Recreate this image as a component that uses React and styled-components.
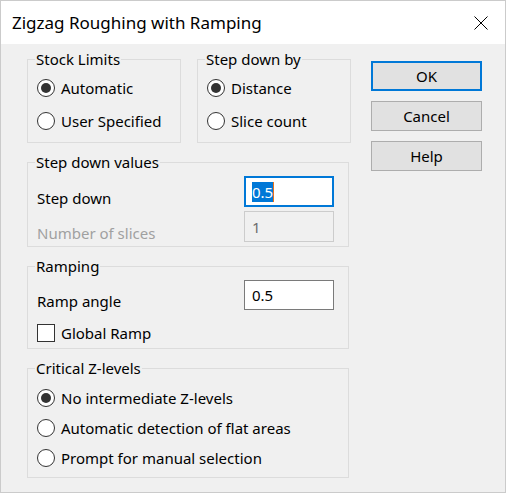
import React from 'react';
import styled, { createGlobalStyle } from 'styled-components';

const GlobalStyle = createGlobalStyle`
  html, body {
    margin: 0;
    padding: 0;
    background: #ffffff;
  }
  body {
    font-family: "Noto Sans", "Open Sans", sans-serif;
    font-size: 15px;
    color: #000000;
  }
`;

const Window = styled.div`
  width: 506px;
  height: 493px;
  box-sizing: border-box;
  border: 1px solid #cbcbcb;
  background: #f0f0f0;
  display: flex;
  flex-direction: column;
`;

const TitleBar = styled.div`
  height: 43px;
  background: #ffffff;
  display: flex;
  align-items: center;
  justify-content: space-between;
  padding: 0 17px 0 11px;
  flex-shrink: 0;
`;

const Title = styled.span`
  font-size: 17px;
  line-height: 22px;
  margin-top: 1px;
`;

const CloseButton = styled.div`
  width: 14px;
  height: 14px;
  display: flex;
`;

const Body = styled.div`
  display: flex;
  padding: 6px 22px 0 26px;
  gap: 22px;
`;

const LeftColumn = styled.div`
  width: 322px;
  display: flex;
  flex-direction: column;
  gap: 10px;
`;

const TopRow = styled.div`
  display: flex;
  gap: 16px;
`;

const Group = styled.fieldset`
  margin: 0;
  min-width: 0;
  flex: ${p => (p.$half ? '0 0 154px' : 'none')};
  box-sizing: border-box;
  border: 1px solid #dcdcdc;
  padding: ${p => p.$pad || '3px 14px 5px 9px'};
`;

const Legend = styled.legend`
  padding: 0 1px;
  margin-left: -2px;
  line-height: 18px;
`;

const OptionRow = styled.label`
  display: flex;
  align-items: center;
  gap: 6px;
  height: ${p => p.$h || 33}px;
  white-space: nowrap;
`;

const Radio = styled.span`
  width: 18px;
  height: 18px;
  box-sizing: border-box;
  border: 1px solid #333333;
  border-radius: 50%;
  background: #ffffff;
  display: flex;
  align-items: center;
  justify-content: center;
  flex-shrink: 0;

  &::after {
    content: '';
    width: 10px;
    height: 10px;
    border-radius: 50%;
    background: #333333;
    display: ${p => (p.$checked ? 'block' : 'none')};
  }
`;

const Checkbox = styled.span`
  width: 18px;
  height: 18px;
  box-sizing: border-box;
  border: 1px solid #333333;
  background: #ffffff;
  flex-shrink: 0;
`;

const FieldRow = styled.div`
  display: grid;
  grid-template-columns: 1fr 90px;
  align-items: end;
  margin-top: ${p => p.$mt || 0}px;
`;

const FieldLabel = styled.span`
  line-height: 18px;
  color: ${p => (p.$disabled ? '#a0a0a0' : '#000000')};
`;

const TextBox = styled.div`
  height: ${p => p.$h || 30}px;
  box-sizing: border-box;
  display: flex;
  align-items: center;
  padding-left: ${p => (p.$focused ? 6 : 7)}px;
  border: ${p =>
    p.$focused ? '2px solid #0078d7' : p.$disabled ? '1px solid #cccccc' : '1px solid #7a7a7a'};
  background: ${p => (p.$disabled ? '#f0f0f0' : '#ffffff')};
  color: ${p => (p.$disabled ? '#6d6d6d' : '#000000')};
`;

const Selection = styled.span`
  background: #0078d7;
  color: #ffffff;
  line-height: 20px;
  border-right: 1px solid #e8731a;
`;

const ButtonColumn = styled.div`
  display: flex;
  flex-direction: column;
  gap: 10px;
  margin-top: 11px;
`;

const Button = styled.button`
  width: 111px;
  height: 30px;
  box-sizing: border-box;
  font-family: inherit;
  font-size: 15px;
  color: #000000;
  background: #e1e1e1;
  border: ${p => (p.$default ? '2px solid #0078d7' : '1px solid #adadad')};
  padding: 0;
`;

export default function App() {
  return (
    <>
      <GlobalStyle />
      <Window>
        <TitleBar>
          <Title>Zigzag Roughing with Ramping</Title>
          <CloseButton>
            <svg width="14" height="14" viewBox="0 0 14 14">
              <path d="M0.5 0.5 L13.5 13.5 M13.5 0.5 L0.5 13.5" stroke="#000" strokeWidth="1" />
            </svg>
          </CloseButton>
        </TitleBar>
        <Body>
          <LeftColumn>
            <TopRow>
              <Group $half>
                <Legend>Stock Limits</Legend>
                <OptionRow><Radio $checked />Automatic</OptionRow>
                <OptionRow><Radio />User Specified</OptionRow>
              </Group>
              <Group $half>
                <Legend>Step down by</Legend>
                <OptionRow><Radio $checked />Distance</OptionRow>
                <OptionRow><Radio />Slice count</OptionRow>
              </Group>
            </TopRow>

            <Group $pad="5px 14px 4px 9px">
              <Legend>Step down values</Legend>
              <FieldRow>
                <FieldLabel>Step down</FieldLabel>
                <TextBox $focused $h={31}><Selection>0.5</Selection></TextBox>
              </FieldRow>
              <FieldRow $mt={4}>
                <FieldLabel $disabled>Number of slices</FieldLabel>
                <TextBox $disabled $h={31}>1</TextBox>
              </FieldRow>
            </Group>

            <Group $pad="5px 14px 0 9px">
              <Legend>Ramping</Legend>
              <FieldRow>
                <FieldLabel>Ramp angle</FieldLabel>
                <TextBox>0.5</TextBox>
              </FieldRow>
              <OptionRow $h={30} style={{ marginTop: 8 }}><Checkbox />Global Ramp</OptionRow>
            </Group>

            <Group $pad="5px 14px 4px 9px">
              <Legend>Critical Z-levels</Legend>
              <OptionRow $h={31}><Radio $checked />No intermediate Z-levels</OptionRow>
              <OptionRow $h={30}><Radio />Automatic detection of flat areas</OptionRow>
              <OptionRow $h={30}><Radio />Prompt for manual selection</OptionRow>
            </Group>
          </LeftColumn>

          <ButtonColumn>
            <Button $default>OK</Button>
            <Button>Cancel</Button>
            <Button>Help</Button>
          </ButtonColumn>
        </Body>
      </Window>
    </>
  );
}
